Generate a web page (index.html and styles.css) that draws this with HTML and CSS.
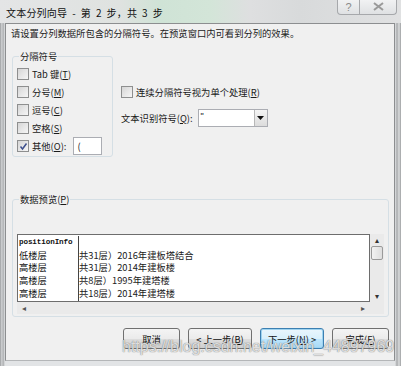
FILE: index.html
```html
<!DOCTYPE html>
<html lang="zh-CN">
<head>
    <meta charset="UTF-8">
    <title>文本分列向导 - 第 2 步，共 3 步</title>
    <link rel="stylesheet" href="styles.css">
</head>
<body>
    <div class="window">
        <div class="titlebar">
            <span class="title">文本分列向导 - 第 2 步，共 3 步</span>
            <div class="caption-btns">
                <span class="cap-btn help">?</span>
                <span class="cap-btn close">
                    <svg width="11" height="9" viewBox="0 0 11 9"><path d="M1 1 L10 8 M10 1 L1 8" stroke="#9a9a9a" stroke-width="2" fill="none"/></svg>
                </span>
            </div>
        </div>

        <div class="client">
            <p class="intro">请设置分列数据所包含的分隔符号。在预览窗口内可看到分列的效果。</p>

            <div class="options">
                <fieldset class="group delims">
                    <legend>分隔符号</legend>
                    <div class="check"><span class="box"></span><span>Tab 键(<u>T</u>)</span></div>
                    <div class="check"><span class="box"></span><span>分号(<u>M</u>)</span></div>
                    <div class="check"><span class="box"></span><span>逗号(<u>C</u>)</span></div>
                    <div class="check"><span class="box"></span><span>空格(<u>S</u>)</span></div>
                    <div class="check">
                        <span class="box">
                            <svg width="9" height="9" viewBox="0 0 9 9"><path d="M1.5 4.5 L3.5 7 L7.5 1.5" stroke="#3d4f8c" stroke-width="1.5" fill="none"/></svg>
                        </span>
                        <span>其他(<u>O</u>):</span>
                        <span class="textbox">(</span>
                    </div>
                </fieldset>

                <div class="right-opts">
                    <div class="check"><span class="box"></span><span>连续分隔符号视为单个处理(<u>R</u>)</span></div>
                    <div class="qualifier">
                        <span>文本识别符号(<u>Q</u>):</span>
                        <span class="combo">
                            <span class="combo-val">"</span>
                            <span class="combo-drop"><svg width="7" height="4" viewBox="0 0 7 4"><path d="M0 0 H7 L3.5 4 Z" fill="#111"/></svg></span>
                        </span>
                    </div>
                </div>
            </div>

            <fieldset class="group preview">
                <legend>数据预览(<u>P</u>)</legend>
                <div class="listview">
                    <div class="rows">
                        <div class="row"><span class="c1 mono">positionInfo</span><span class="c2"></span></div>
                        <div class="row"><span class="c1">低楼层</span><span class="c2">共31层）2016年建板塔结合</span></div>
                        <div class="row"><span class="c1">高楼层</span><span class="c2">共31层）2014年建板楼</span></div>
                        <div class="row"><span class="c1">高楼层</span><span class="c2">共8层）1995年建塔楼</span></div>
                        <div class="row"><span class="c1">高楼层</span><span class="c2">共18层）2014年建塔楼</span></div>
                        <div class="row"><span class="c1"></span><span class="c2"></span></div>
                    </div>
                    <div class="vscroll">
                        <span class="arrow">▴</span>
                        <span class="thumb"></span>
                        <span class="spacer"></span>
                        <span class="arrow">▾</span>
                    </div>
                    <div class="hscroll">
                        <span class="arrow">◂</span>
                        <span class="arrow">▸</span>
                    </div>
                    <div class="corner"></div>
                </div>
            </fieldset>

            <div class="buttons">
                <button>取消</button>
                <button>&lt; 上一步(<u>B</u>)</button>
                <button class="focused">下一步(<u>N</u>) &gt;</button>
                <button>完成(<u>F</u>)</button>
            </div>

            <span class="watermark">https://blog.csdn.net/weixin_44897969</span>
        </div>
    </div>
</body>
</html>
```

FILE: styles.css
```css
body {
    margin: 0;
    width: 401px;
    height: 366px;
    overflow: hidden;
    font-family: "Noto Sans CJK SC", "Liberation Sans", sans-serif;
    font-size: 9.3px;
    color: #1a1a1a;
}
u {
    text-decoration: underline;
    text-underline-offset: 1px;
}
.window {
    width: 401px;
    height: 366px;
    box-sizing: border-box;
    padding: 0 6px 5px 5px;
    display: flex;
    flex-direction: column;
    background: linear-gradient(90deg, #9a9c9e 0, #d8dadc 2px, #a6a8aa 3px, #e2e4e6 5px, #e2e4e6 395px, #a8aaac 397px, #dcdedf 399px, #9c9ea0 401px);
}
.titlebar {
    height: 23px;
    display: flex;
    justify-content: space-between;
    align-items: flex-start;
    margin: 0 -6px 0 -5px;
    padding: 0 4px 0 6px;
    background: linear-gradient(90deg, #e4e5e6 0, #dfe2e0 120px, #cfe3d6 160px, #d3e5d8 210px, #dedfe0 250px, #d8dadb 300px, #e0e1e2 401px);
}
.title {
    margin-top: 6px;
    line-height: 14px;
    font-size: 10px;
    letter-spacing: 0.2px;
    word-spacing: 2.5px;
    color: #111;
}
.caption-btns {
    display: flex;
    margin-top: -1px;
}
.cap-btn {
    height: 15px;
    display: flex;
    align-items: center;
    justify-content: center;
    border: 1px solid #a6a8ab;
    border-top: none;
    background: linear-gradient(#f2f3f4, #dfe1e3);
    color: #8a8a8a;
    font-family: "Liberation Sans", sans-serif;
    font-size: 11px;
}
.cap-btn.help {
    width: 21px;
    border-radius: 0 0 0 4px;
}
.cap-btn.close {
    width: 36px;
    border-left: none;
    border-radius: 0 0 4px 0;
}
.client {
    position: relative;
    flex: 1;
    border: 1px solid #8c8e90;
    border-bottom-color: #b4b6b8;
    background-color: #f0f0f0;
    padding: 0 5px 0 6px;
    display: flex;
    flex-direction: column;
}
.intro {
    margin: 2px 0 0 -1px;
    line-height: 14px;
}
.options {
    display: flex;
    gap: 8px;
    margin-top: 10px;
}
.group {
    margin: 0;
    padding: 0;
    border: 1px solid #d5dfe5;
    border-radius: 3px;
    min-width: 0;
}
.group legend {
    margin-left: 2px;
    padding: 0 1px;
    line-height: 12px;
}
.delims {
    width: 95px;
    padding: 3px 0 1px 4px;
    box-sizing: content-box;
}
.check {
    height: 18px;
    display: flex;
    align-items: center;
    white-space: nowrap;
}
.box {
    width: 10px;
    height: 10px;
    border: 1px solid #8e8f8f;
    background: linear-gradient(135deg, #d6d6d6, #f6f6f6);
    margin-right: 3px;
    display: flex;
    align-items: center;
    justify-content: center;
    flex-shrink: 0;
}
.textbox {
    width: 24px;
    height: 16px;
    margin-left: 7px;
    border: 1px solid #abadb3;
    background-color: #fff;
    padding-left: 3px;
    line-height: 16px;
    box-sizing: content-box;
}
.right-opts {
    padding-top: 35px;
    display: flex;
    flex-direction: column;
    gap: 10px;
}
.right-opts .check {
    height: 14px;
}
.qualifier {
    display: flex;
    align-items: center;
    gap: 5px;
    white-space: nowrap;
}
.combo {
    width: 68px;
    height: 16px;
    border: 1px solid #abadb3;
    background-color: #fff;
    display: flex;
    justify-content: space-between;
}
.combo-val {
    padding-left: 2px;
    font-family: "Liberation Sans", sans-serif;
    font-size: 9px;
    line-height: 12px;
    color: #111;
}
.combo-drop {
    width: 12px;
    border-left: 1px solid #b8b8b8;
    background: linear-gradient(#f4f4f4, #dcdcdc);
    display: flex;
    align-items: center;
    justify-content: center;
}
.preview {
    margin-top: 36px;
    padding: 29px 4px 2px 4px;
}
.listview {
    display: grid;
    grid-template-columns: 353px 14px;
    grid-template-rows: 68px 12px;
}
.rows {
    background-color: #fff;
    border: 1px solid #6d6d6d;
    overflow: hidden;
    padding-top: 1px;
}
.row {
    display: flex;
    height: 12.7px;
    line-height: 12.7px;
    white-space: nowrap;
}
.c1 {
    width: 59px;
    padding-left: 1px;
    border-right: 1px solid #444;
    color: #111;
}
.c1.mono {
    font-family: "Liberation Mono", monospace;
    font-size: 7.6px;
    font-weight: bold;
    letter-spacing: -0.1px;
}
.vscroll {
    display: flex;
    flex-direction: column;
    align-items: center;
    background-color: #eaeaea;
    color: #333;
    font-size: 8px;
}
.vscroll .arrow {
    height: 12px;
    line-height: 12px;
}
.vscroll .thumb {
    width: 10px;
    height: 12px;
    border: 1px solid #9a9a9a;
    border-radius: 2px;
    background: linear-gradient(90deg, #f2f2f2, #dedede);
}
.vscroll .spacer {
    flex: 1;
}
.hscroll {
    display: flex;
    justify-content: space-between;
    padding: 0 5px;
    background-color: #eaeaea;
    color: #555;
    font-size: 8px;
    line-height: 11px;
}
.corner {
    background-color: #eaeaea;
}
.buttons {
    display: flex;
    justify-content: flex-end;
    gap: 8px;
    margin-top: 11px;
}
button {
    height: 21px;
    padding: 0;
    border: 1px solid #707070;
    border-radius: 3px;
    background: linear-gradient(#f4f4f4 0, #ebebeb 50%, #dddddd 51%, #cfcfcf 100%);
    font-family: inherit;
    font-size: 9.3px;
    color: #111;
    width: 57px;
}
button:nth-child(2),
button:nth-child(3) {
    width: 64px;
}
button.focused {
    border-color: #3c7fb1;
    background: linear-gradient(#eaf6fd 0, #d9f0fc 50%, #bee6fd 51%, #a7d9f5 100%);
    box-shadow: inset 0 0 0 1px #9ed3f0;
}
.watermark {
    position: absolute;
    left: 116px;
    top: 314px;
    font-family: "Liberation Sans", sans-serif;
    font-size: 16px;
    color: rgba(255, 255, 255, 0.75);
    text-shadow: 0 0 1px rgba(90, 90, 90, 0.6), 0 0 1px rgba(90, 90, 90, 0.6);
    white-space: nowrap;
    pointer-events: none;
}
```
